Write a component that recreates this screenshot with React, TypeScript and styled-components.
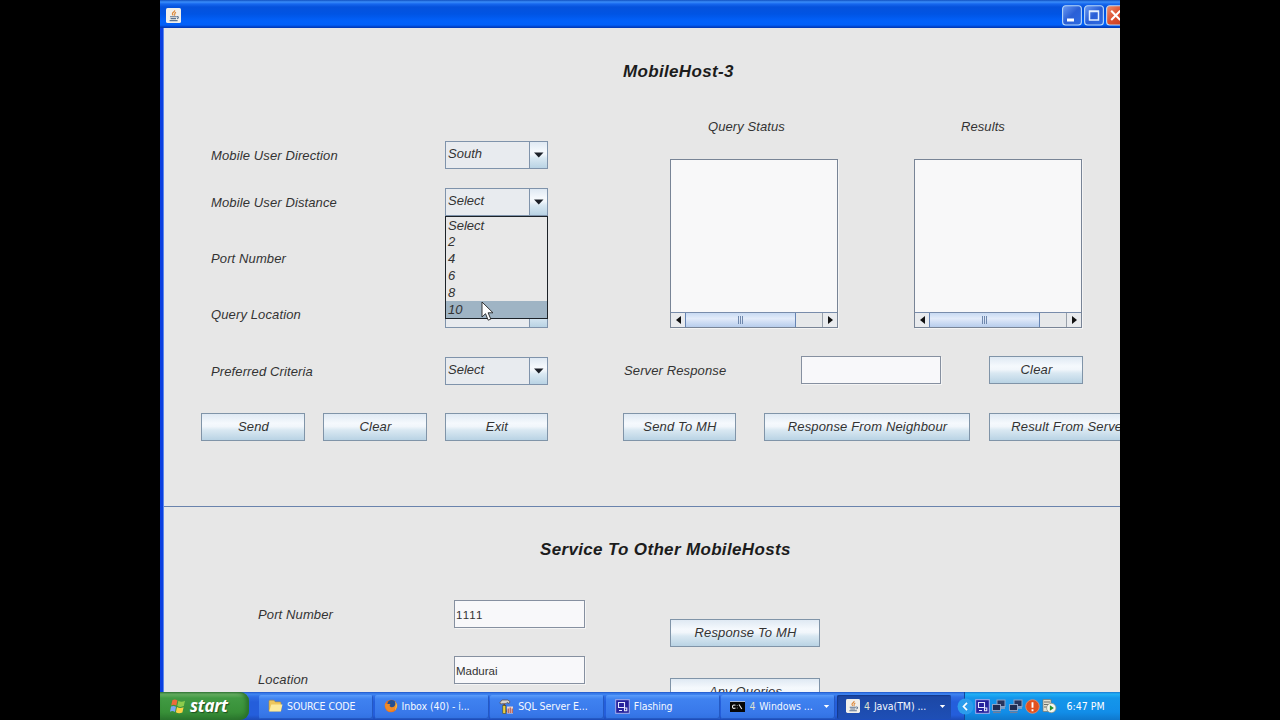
import React from 'react';
import styled, { createGlobalStyle, css } from 'styled-components';

const Global = createGlobalStyle`
  * { box-sizing: border-box; }
  body { margin: 0; background: #000; overflow: hidden; }
`;

const Stage = styled.div`
  width: 1280px;
  height: 720px;
  padding-left: 160px;
  background: #000;
  overflow: hidden;
`;

const Desktop = styled.div`
  width: 960px;
  height: 720px;
  overflow: hidden;
  display: flex;
  flex-direction: column;
  font-family: 'Liberation Sans', Arial, sans-serif;
`;

const TitleBar = styled.header`
  flex: none;
  height: 28px;
  padding: 3px 0 0 6px;
  display: flex;
  align-items: center;
  background: linear-gradient(#1050c0 0, #3a8dfa 2px, #1667ee 4px, #0552dc 7px, #0054e4 14px, #0261fa 21px, #0260f8 25px, #0140c4 27px, #0038b4 28px);
`;

const Controls = styled.div`
  margin-left: auto;
  width: 58px;
  display: flex;
  gap: 2px;
  overflow: hidden;
`;

const WindowBody = styled.main`
  flex: none;
  height: 664px;
  border-left: 3px solid #0b3fe0;
  box-shadow: inset 1px 0 0 #5a86ee;
  padding-left: 1px;
  background: #e7e7e7;
  overflow: hidden;
`;

const QueryPanel = styled.section`
  height: 479px;
  border-bottom: 1px solid #6a83ad;
`;

const Heading = styled.h1<{ $x: number; $top: number }>`
  margin: 0;
  padding: ${p => p.$top}px 0 0 ${p => p.$x}px;
  font-size: 17px;
  line-height: 20px;
  font-style: italic;
  font-weight: bold;
  letter-spacing: 0.34px;
  white-space: nowrap;
  color: #1c1c1c;
`;

const Columns = styled.div`
  display: flex;
`;

const LeftForm = styled.div`
  flex: none;
  width: 459px;
  padding: 59px 0 0 37px;
`;

const RightForm = styled.div`
  flex: none;
  padding-top: 36px;
`;

const Row = styled.div<{ $gap?: number }>`
  display: flex;
  align-items: center;
  height: 28px;
  margin-bottom: ${p => p.$gap ?? 28}px;
`;

const Label = styled.label<{ $w: number; $indent?: number }>`
  flex: none;
  width: ${p => p.$w}px;
  padding: 1px 0 0 ${p => p.$indent ?? 0}px;
  font-size: 13px;
  line-height: 16px;
  letter-spacing: 0.12px;
  font-style: italic;
  white-space: nowrap;
  color: #333;
`;

const shade = css`
  background: linear-gradient(#dfe9f3 0, #f5f9fd 35%, #f1f6fb 48%, #d9e8f2 62%, #b9d3e4 100%);
`;

const Push = styled.button<{ $w: number; $ml?: number }>`
  flex: none;
  width: ${p => p.$w}px;
  height: 28px;
  margin: 0 0 0 ${p => p.$ml ?? 0}px;
  padding: 0 0 0 1px;
  border: 1px solid #8094a8;
  ${shade}
  font: italic 13px/16px 'Liberation Sans', Arial, sans-serif;
  letter-spacing: 0.15px;
  white-space: nowrap;
  color: #333;
`;

const ComboBox = styled.div`
  position: relative;
  flex: none;
  display: flex;
  width: 103px;
  height: 28px;
  border: 1px solid #7f93ab;
  background: #e8ebef;
`;

const ComboValue = styled.span`
  flex: 1;
  padding: 4px 0 0 2px;
  font: italic 13px/16px 'Liberation Sans', Arial, sans-serif;
  color: #333;
`;

const ComboArrow = styled.span`
  width: 18px;
  border-left: 1px solid #7f93ab;
  display: flex;
  align-items: center;
  justify-content: center;
  ${shade}
`;

const Popup = styled.ul`
  position: absolute;
  z-index: 2;
  left: -1px;
  top: 27px;
  width: 103px;
  height: 103px;
  margin: 0;
  padding: 0;
  list-style: none;
  border: 1px solid #1c2228;
  background: #e8e8e8;
`;

const Option = styled.li<{ $active?: boolean }>`
  height: 17px;
  padding-left: 2px;
  font: italic 13px/17px 'Liberation Sans', Arial, sans-serif;
  color: #333;
  background: ${p => (p.$active ? '#9fb4c4' : 'transparent')};

  &:first-child {
    height: 16px;
  }
`;

const Pointer = styled.svg`
  position: absolute;
  left: 35px;
  top: 84px;
`;

const Field = styled.div<{ $w: number; $ls?: number }>`
  flex: none;
  width: ${p => p.$w}px;
  height: 28px;
  padding: 1px 0 0 1px;
  border: 1px solid #8690a0;
  background: #f8f8fa;
  box-shadow: 1px 1px 0 #f4f4f4;
  font-size: 11.5px;
  line-height: 26px;
  letter-spacing: ${p => p.$ls ?? 0}px;
  font-kerning: none;
  color: #333;
`;

const ListColumn = styled.div`
  width: 168px;
`;

const ListCaption = styled.div<{ $pad: number }>`
  height: 41px;
  padding: 1px 0 0 ${p => p.$pad}px;
  font-size: 13px;
  line-height: 15px;
  letter-spacing: 0.08px;
  font-style: italic;
  color: #333;
`;

const ListBox = styled.div`
  width: 168px;
  height: 169px;
  display: flex;
  flex-direction: column;
  border: 1px solid #788496;
  box-shadow: 1px 1px 0 #f4f4f4;
`;

const ListArea = styled.div`
  flex: 1;
  background: #f8f8f9;
`;

const ScrollBar = styled.div`
  height: 15px;
  display: flex;
  border-top: 1px solid #788cab;
  background: #e6e8ea;
`;

const ScrollStep = styled.span`
  width: 14px;
  display: flex;
  align-items: center;
  justify-content: center;
  background: #e9ebee;
`;

const ScrollThumb = styled.span`
  width: 111px;
  display: flex;
  align-items: center;
  justify-content: center;
  gap: 1px;
  border: solid #6584b4;
  border-width: 0 1px;
  background: linear-gradient(#c8daf2 0, #e3ecfa 40%, #d3e0f5 60%, #b7cdec 100%);
`;

const Grip = styled.i`
  width: 1px;
  height: 8px;
  background: #6f88ad;
`;

const ScrollTrack = styled.span`
  flex: 1;
  border-right: 1px solid #98a0aa;
`;

const ServiceBody = styled.div`
  display: flex;
`;

const ServiceForm = styled.div`
  flex: none;
  width: 506px;
  padding: 40px 0 0 94px;
`;

const ServiceButtons = styled.div`
  flex: none;
  padding-top: 59px;
  display: flex;
  flex-direction: column;
  gap: 31px;
`;

const Sunk = styled.span`
  display: block;
  padding-top: 18px;
`;

const TaskBar = styled.footer`
  flex: none;
  height: 28px;
  display: flex;
  background: linear-gradient(#1f55c8 0, #3f86f2 2px, #2f6ce4 5px, #245edb 10px, #245edc 23px, #1c4bb8 28px);
  font-family: 'DejaVu Sans Condensed', 'DejaVu Sans', sans-serif;
`;

const StartButton = styled.div`
  flex: none;
  width: 89px;
  height: 28px;
  margin-right: 10px;
  padding-left: 10px;
  display: flex;
  align-items: center;
  gap: 4px;
  border-radius: 0 9px 9px 0;
  background: linear-gradient(#3a7b40 0, #6bb266 2px, #419a43 6px, #389038 20px, #2b762e 28px);
  box-shadow: inset -3px 0 4px #2a702c;
  color: #fff;
  font: italic bold 17px/26px 'Open Sans', 'Liberation Sans', sans-serif;
  letter-spacing: -0.3px;
  text-shadow: 1px 1px 1px #1d5020;
`;

const Task = styled.div<{ $active?: boolean }>`
  flex: none;
  width: 114px;
  height: 24px;
  margin: 3px 1.6px 0 0;
  padding: 0 5px 2px 9px;
  display: flex;
  align-items: center;
  gap: 4px;
  border-radius: 2px;
  color: #f4f8ff;
  font-size: 10.5px;
  letter-spacing: -0.08px;
  white-space: nowrap;
  background: ${p => (p.$active
    ? 'linear-gradient(#1c47a4, #1e4fb6)'
    : 'linear-gradient(#5a9cfa 0, #3f82f0 4px, #3878ea 18px, #3170e0 24px)')};
  box-shadow: ${p => (p.$active ? 'inset 1px 1px 1px #153a8c' : 'inset -1px -1px 0 #2459c4')};
`;

const TaskCount = styled.b`
  font-weight: normal;
  color: #dfe0d0;
`;

const TaskMore = styled.svg`
  margin-left: auto;
  flex: none;
`;

const Tray = styled.div`
  flex: 1;
  margin-left: 11px;
  padding-left: 10px;
  position: relative;
  display: flex;
  align-items: center;
  gap: 1px;
  border-left: 1px solid #14489c;
  background: linear-gradient(#1a78d0 0, #20b0f6 2px, #1496ea 6px, #128ee8 20px, #0f78cc 28px);
  color: #fff;
  font-size: 10.5px;
  white-space: nowrap;
`;

const TrayToggle = styled.svg`
  position: absolute;
  left: -8px;
  top: 6px;
`;

const Clock = styled.span`
  margin-left: 9px;
`;

const JavaIcon = ({ size = 15 }: { size?: number }) => (
  <svg width={size} height={size} viewBox="0 0 15 15">
    <rect width="15" height="15" rx="1.5" fill="#f1efea" />
    <path d="M8.6 2.2C9.5 3.6 6 4.4 6.4 6c.2.8 1 1.2 1 1.2M10 4.4C7.5 5.6 9.4 6.4 8.4 7.6" fill="none" stroke="#dd8a3c" strokeWidth="1.2" />
    <path d="M4 8.8h6.6M4.6 10.6h5.4M3.6 12.6h8M10.8 8.6c2.2-.3 2 1.6.2 2" fill="none" stroke="#5c7390" strokeWidth="1.1" />
  </svg>
);

const CaptionButton = styled.svg`
  flex: none;
`;

const BoxIcon = ({ kind }: { kind: 'min' | 'max' | 'close' }) => (
  <CaptionButton width="20" height="21" viewBox="0 0 20 21">
    <defs>
      <linearGradient id={`cap-${kind}`} x1="0" y1="0" x2="1" y2="1">
        <stop offset="0" stopColor={kind === 'close' ? '#ee9070' : '#6b9af2'} />
        <stop offset=".5" stopColor={kind === 'close' ? '#dc5030' : '#2a5fd6'} />
        <stop offset="1" stopColor={kind === 'close' ? '#c8381c' : '#2d6be4'} />
      </linearGradient>
    </defs>
    <rect x=".6" y=".8" width="18.8" height="19.2" rx="3" fill={`url(#cap-${kind})`} stroke="#b8d8f8" strokeWidth="1.1" />
    {kind === 'min' && <rect x="5" y="13.5" width="7" height="3" fill="#fff" />}
    {kind === 'max' && <path d="M5.5 6.5h9v8.500h-9zM4.800 6h10.400" fill="none" stroke="#e4f0ff" strokeWidth="1.5" />}
    {kind === 'close' && <path d="M5.2 5.8l9 9.200M14.200 5.800l-9 9.200" stroke="#fff" strokeWidth="2" />}
  </CaptionButton>
);

const Flag = () => (
  <svg width="16" height="17" viewBox="0 0 16 17">
    <path d="M2.400 2.200C4 1 5.800 1.300 7.400 2.400L6.300 7.600C4.700 6.600 3 6.300 1.200 7.500z" fill="#ee6a3a" />
    <path d="M8.400 2.800c2 1.200 4 1.200 6.600 0l-1.200 5.300c-2.300 1.100-4.500 1.100-6.500-.1z" fill="#8dcc4c" />
    <path d="M1 8.600c1.800-1.100 3.500-.8 5 .1L5 14c-1.600-1.100-3.200-1.400-5-.2z" fill="#79a6f4" />
    <path d="M7 9.100c2 1.200 4.300 1.200 6.600.1l-1.200 5.300c-2.400 1.100-4.500 1-6.500-.2z" fill="#fbd144" />
  </svg>
);

const FolderIcon = () => (
  <svg width="15" height="14" viewBox="0 0 15 14">
    <path d="M1 2.200q0-1 1-1h4l1.300 1.700H12q1 0 1 1V12H1z" fill="#eec75c" stroke="#b78c34" strokeWidth=".6" />
    <path d="M3.300 5.500H14.500L12.800 12.500H1.200z" fill="#fdeb9c" />
  </svg>
);

const FirefoxIcon = () => (
  <svg width="14" height="14" viewBox="0 0 14 14">
    <circle cx="7" cy="7" r="6.300" fill="#e87422" />
    <circle cx="7.600" cy="5.400" r="4.300" fill="#244f92" />
    <path d="M1 4.200C3 5.700 4.500 4.500 6.500 5.300 5 6.300 5.600 8 7.500 8.200 10 8.300 11 7 11.800 4.500c1 4-1.500 8-5 8-3.500-.2-6-3-5.800-8.300" fill="#f08a28" />
    <path d="M11 2.500c2.500 2.300 2.500 6.500-.2 9 1.200-3.300 1.300-6 .2-9" fill="#f8c848" />
  </svg>
);

const SqlIcon = () => (
  <svg width="15" height="15" viewBox="0 0 15 15">
    <path d="M1 3.500L3 1h6l2 1.800-1 1.700-2-1-1 1.200H4L1.500 5z" fill="#d4d2cc" stroke="#5c4840" strokeWidth=".7" />
    <path d="M5 5l2 8" stroke="#6c4630" strokeWidth="1.600" />
    <rect x="3.800" y="6.500" width="3" height="8" fill="#e8d040" stroke="#4d4620" strokeWidth=".6" />
    <rect x="8" y="7.500" width="6" height="7" fill="#ead6d0" />
    <path d="M9.200 14V9.500M11.200 14V8.500M13.200 14V9.500" stroke="#a84030" />
  </svg>
);

const ScreenIcon = () => (
  <svg width="15" height="15" viewBox="0 0 15 15">
    <rect x=".7" y=".7" width="13.600" height="13.600" fill="#24209c" stroke="#a8b0ec" strokeWidth="1" />
    <path d="M3.500 3.500h6v5h-6zM9.500 9h2.300v2.800H9.500zM4 11.500h3" fill="none" stroke="#e4e8ff" strokeWidth="1.100" />
  </svg>
);

const ConsoleIcon = () => (
  <svg width="15" height="11" viewBox="0 0 15 11">
    <rect width="15" height="11" fill="#060606" />
    <path d="M0 .5h15" stroke="#a4b8dc" />
    <path d="M5.500 4.300q-3-1-3 1.400t3 1.300M7.300 4.500v.5M7.300 6.700v.6M9 3.500l2.800 4.500" fill="none" stroke="#eee" strokeWidth="1.100" />
  </svg>
);

const NetIcon = () => (
  <svg width="16" height="15" viewBox="0 0 16 15">
    <rect x="6" y="1" width="8" height="6.500" fill="#26345c" stroke="#8ea2c4" />
    <path d="M7 9h7" stroke="#9aa6bc" strokeWidth="1.500" />
    <rect x="1.500" y="5.500" width="8" height="6" fill="#1f2c52" stroke="#8ea2c4" />
    <path d="M2 13.300h7.500" stroke="#707e9a" strokeWidth="1.600" />
  </svg>
);

const AlertIcon = () => (
  <svg width="15" height="15" viewBox="0 0 15 15">
    <circle cx="7.500" cy="7.500" r="6.800" fill="#e2501e" stroke="#f09068" strokeWidth=".8" />
    <path d="M7.500 3.200v5.600M7.500 10.200v2" stroke="#fff" strokeWidth="1.900" />
  </svg>
);

const ServiceIcon = () => (
  <svg width="16" height="16" viewBox="0 0 16 16">
    <path d="M2 1.500h8v12H2z" fill="#e4e0d2" stroke="#77776c" strokeWidth=".7" />
    <path d="M3 4h6M3 6.500h6M3 9h4" stroke="#6e6e68" />
    <circle cx="10.300" cy="10" r="4.700" fill="#f4f6ee" stroke="#8c948a" strokeWidth=".8" />
    <path d="M8.900 7.200v5.600l4-2.800z" fill="#25932d" />
  </svg>
);

const More = () => (
  <TaskMore width="7" height="5" viewBox="0 0 7 5"><path d="M.8 1h5.400L3.500 4z" fill="#fff" /></TaskMore>
);

const Combo = ({ value, children }: { value: string; children?: React.ReactNode }) => (
  <ComboBox>
    <ComboValue>{value}</ComboValue>
    <ComboArrow>
      <svg width="10" height="6" viewBox="0 0 10 6"><path d="M0 .5h9.500L4.750 5.500z" fill="#1c2028" /></svg>
    </ComboArrow>
    {children}
  </ComboBox>
);

const List = ({ caption, pad }: { caption: string; pad: number }) => (
  <ListColumn>
    <ListCaption $pad={pad}>{caption}</ListCaption>
    <ListBox>
      <ListArea />
      <ScrollBar>
        <ScrollStep><svg width="5" height="8" viewBox="0 0 5 8"><path d="M5 0v8L0 4z" fill="#111" /></svg></ScrollStep>
        <ScrollThumb><Grip /><Grip /><Grip /></ScrollThumb>
        <ScrollTrack />
        <ScrollStep><svg width="5" height="8" viewBox="0 0 5 8"><path d="M0 0v8l5-4z" fill="#111" /></svg></ScrollStep>
      </ScrollBar>
    </ListBox>
  </ListColumn>
);

const Lists = styled.div`
  display: flex;
  gap: 76px;
  padding-left: 47px;
  margin-bottom: 28px;
`;

const distances = ['Select', '2', '4', '6', '8', '10'];

export default function App() {
  return (
    <Stage>
      <Global />
      <Desktop>
        <TitleBar>
          <JavaIcon />
          <Controls>
            <BoxIcon kind="min" />
            <BoxIcon kind="max" />
            <BoxIcon kind="close" />
          </Controls>
        </TitleBar>
        <WindowBody>
          <QueryPanel>
            <Heading $x={459} $top={34}>MobileHost-3</Heading>
            <Columns>
              <LeftForm>
                <Row $gap={19}><Label $w={244} $indent={10}>Mobile User Direction</Label><Combo value="South" /></Row>
                <Row>
                  <Label $w={244} $indent={10}>Mobile User Distance</Label>
                  <Combo value="Select">
                    <Popup>
                      {distances.map(d => <Option key={d} $active={d === '10'}>{d}</Option>)}
                      <Pointer width="13" height="21" viewBox="0 0 13 21">
                        <path d="M1 1v15l3.500-3.300 2.700 6.500 2.600-1.100-2.700-6.300H12z" fill="#fff" stroke="#222" strokeWidth=".9" />
                      </Pointer>
                    </Popup>
                  </Combo>
                </Row>
                <Row><Label $w={244} $indent={10}>Port Number</Label></Row>
                <Row $gap={29}><Label $w={244} $indent={10}>Query Location</Label><Combo value="" /></Row>
                <Row><Label $w={244} $indent={10}>Preferred Criteria</Label><Combo value="Select" /></Row>
                <Row>
                  <Push $w={104}>Send</Push>
                  <Push $w={104} $ml={18}>Clear</Push>
                  <Push $w={103} $ml={18}>Exit</Push>
                </Row>
              </LeftForm>
              <RightForm>
                <Lists>
                  <List caption="Query Status" pad={38} />
                  <List caption="Results" pad={47} />
                </Lists>
                <Row $gap={29}>
                  <Label $w={178} $indent={1}>Server Response</Label>
                  <Field $w={140} />
                  <Push $w={94} $ml={48}>Clear</Push>
                </Row>
                <Row>
                  <Push $w={113}>Send To MH</Push>
                  <Push $w={206} $ml={28}>Response From Neighbour</Push>
                  <Push $w={159} $ml={19}>Result From Server</Push>
                </Row>
              </RightForm>
            </Columns>
          </QueryPanel>
          <Heading as="h2" $x={376} $top={33}>Service To Other MobileHosts</Heading>
          <ServiceBody>
            <ServiceForm>
              <Row><Label $w={196}>Port Number</Label><Field $w={131} $ls={0.25}>1111</Field></Row>
              <Row><Label $w={196}><Sunk>Location</Sunk></Label><Field $w={131}>Madurai</Field></Row>
            </ServiceForm>
            <ServiceButtons>
              <Push $w={150}>Response To MH</Push>
              <Push $w={150}>Any Queries</Push>
            </ServiceButtons>
          </ServiceBody>
        </WindowBody>
        <TaskBar>
          <StartButton><Flag />start</StartButton>
          <Task><FolderIcon />SOURCE CODE</Task>
          <Task><FirefoxIcon />Inbox (40) - i...</Task>
          <Task><SqlIcon />SQL Server E...</Task>
          <Task><ScreenIcon />Flashing</Task>
          <Task><ConsoleIcon /><TaskCount>4</TaskCount>Windows ...<More /></Task>
          <Task $active><JavaIcon size={14} /><TaskCount>4</TaskCount>Java(TM) ...<More /></Task>
          <Tray>
            <TrayToggle width="17" height="17" viewBox="0 0 17 17">
              <circle cx="8.500" cy="8.500" r="8" fill="#2c9cec" />
              <path d="M10 4.800L6.500 8.500l3.500 3.700" fill="none" stroke="#fff" strokeWidth="1.700" />
            </TrayToggle>
            <ScreenIcon /><NetIcon /><NetIcon /><AlertIcon /><ServiceIcon />
            <Clock>6:47 PM</Clock>
          </Tray>
        </TaskBar>
      </Desktop>
    </Stage>
  );
}
